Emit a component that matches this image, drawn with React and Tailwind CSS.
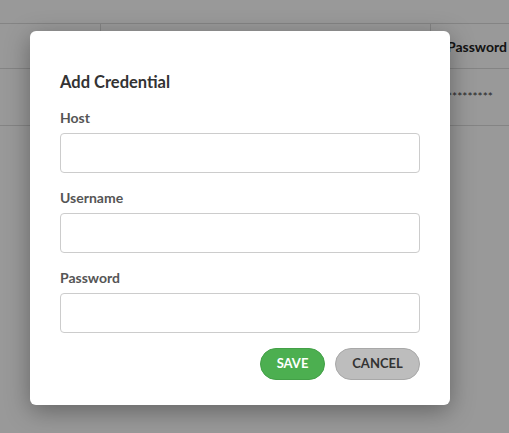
export default function App() {
  const field = (label) => (
    <div className="flex flex-col">
      <label className="text-[14px] leading-[20px] font-bold text-[#555]">{label}</label>
      <input
        type="text"
        className="mt-[5px] h-[40px] w-full rounded-[4px] border border-[#ccc] bg-white px-3 outline-none"
      />
    </div>
  );
  return (
    <div
      className="relative h-[433px] w-[509px] overflow-hidden bg-white"
      style={{ fontFamily: "Lato, 'Open Sans', sans-serif" }}
    >
      <div className="pt-[23px]">
        <div className="flex h-[46px] border-y border-[#ddd] bg-white">
          <div className="w-[101px] border-r border-[#ddd]"></div>
          <div className="w-[330px] border-r border-[#ddd]"></div>
          <div className="flex flex-1 items-center pl-[16px] text-[14px] font-bold text-[#222]">Password</div>
        </div>
        <div className="flex h-[57px] border-b border-[#ddd]">
          <div className="w-[101px]"></div>
          <div className="w-[330px]"></div>
          <div className="flex flex-1 items-center pl-[16px] text-[12px] tracking-[0px] text-[#444]">*********</div>
        </div>
      </div>
      <div className="absolute inset-0 bg-black/40">
        <div className="ml-[30px] mt-[31px] w-[420px] rounded-[6px] bg-white px-[30px] pb-[25px] pt-[39px] shadow-[0_6px_24px_rgba(0,0,0,0.35)]">
          <h2 className="text-[16.5px] leading-[24px] font-bold text-[#333]">Add Credential</h2>
          <div className="mt-[14px] flex flex-col gap-[15px]">
            {field("Host")}
            {field("Username")}
            {field("Password")}
          </div>
          <div className="mt-[15px] flex justify-end gap-[10px]">
            <button className="h-[32px] w-[65px] rounded-full border border-[#43a047] bg-[#4caf50] text-[13px] font-bold text-white">
              SAVE
            </button>
            <button className="h-[32px] w-[85px] rounded-full border border-[#a8a8a8] bg-[#bdbdbd] text-[13px] font-bold text-[#333]">
              CANCEL
            </button>
          </div>
        </div>
      </div>
    </div>
  );
}
